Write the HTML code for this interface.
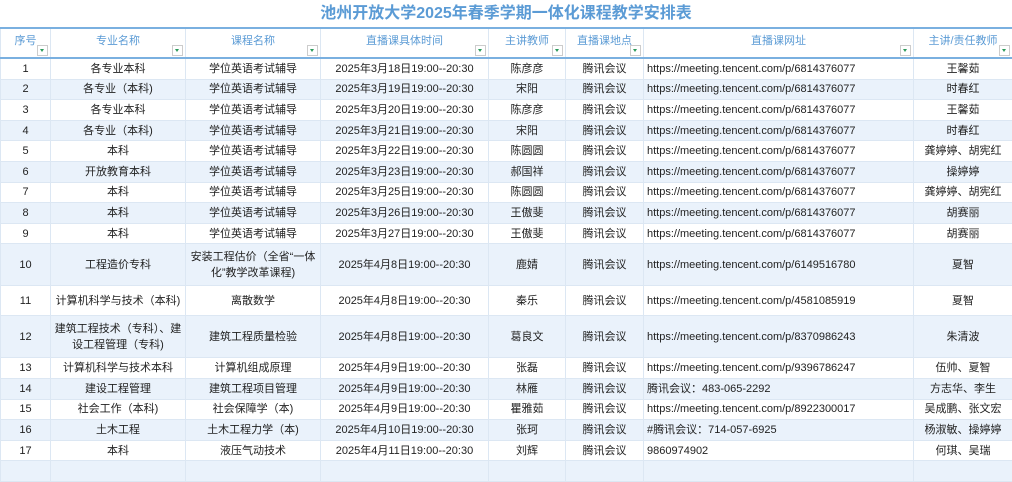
<!DOCTYPE html>
<html><head><meta charset="utf-8"><style>
body{margin:0;width:1012px;height:463px;overflow:hidden;background:#fff;font-family:"Liberation Sans","Noto Sans CJK SC",sans-serif;}
.title{position:absolute;left:0;top:3px;width:1012px;text-align:center;color:#5b9bd5;font-weight:bold;font-size:16px;line-height:22px;}
table{position:absolute;left:0;top:27px;border-collapse:collapse;table-layout:fixed;width:1012px;font-size:11px;color:#222;}
td,th{border-left:1px solid #dce7f3;border-right:1px solid #dce7f3;border-bottom:1px solid #dce7f3;padding:0 2px;text-align:center;overflow:hidden;white-space:nowrap;line-height:14px;}
th{height:23px;color:#5b9bd5;font-weight:normal;font-size:11px;border-top:2px solid #7ab0e0;border-bottom:2px solid #7ab0e0;position:relative;vertical-align:top;padding-top:5px;padding-bottom:0;}
th i{position:absolute;right:2px;bottom:1px;width:9px;height:9px;border:1px solid #ccc;background:#fff;}
th i:after{content:"";position:absolute;left:2px;top:3px;border-left:2.5px solid transparent;border-right:2.5px solid transparent;border-top:3px solid #2a9a5a;}
tr.s td{background:#eaf2fb;}
td.u{text-align:left;padding-left:3px;}
tr.h1 td{height:19.6px;}
td.w{white-space:normal;line-height:16px;}
</style></head><body>
<div class="title">池州开放大学2025年春季学期一体化课程教学安排表</div>
<table>
<colgroup><col style="width:50px"><col style="width:135px"><col style="width:135px"><col style="width:168px"><col style="width:77px"><col style="width:78px"><col style="width:270px"><col style="width:99px"></colgroup>
<tr><th>序号<i></i></th><th>专业名称<i></i></th><th>课程名称<i></i></th><th>直播课具体时间<i></i></th><th>主讲教师<i></i></th><th>直播课地点<i></i></th><th>直播课网址<i></i></th><th>主讲/责任教师<i></i></th></tr>
<tr class="h1"><td>1</td><td>各专业本科</td><td>学位英语考试辅导</td><td>2025年3月18日19:00--20:30</td><td>陈彦彦</td><td>腾讯会议</td><td class="u">https://meeting.tencent.com/p/6814376077</td><td>王馨茹</td></tr>
<tr class="h1 s"><td>2</td><td>各专业（本科)</td><td>学位英语考试辅导</td><td>2025年3月19日19:00--20:30</td><td>宋阳</td><td>腾讯会议</td><td class="u">https://meeting.tencent.com/p/6814376077</td><td>时春红</td></tr>
<tr class="h1"><td>3</td><td>各专业本科</td><td>学位英语考试辅导</td><td>2025年3月20日19:00--20:30</td><td>陈彦彦</td><td>腾讯会议</td><td class="u">https://meeting.tencent.com/p/6814376077</td><td>王馨茹</td></tr>
<tr class="h1 s"><td>4</td><td>各专业（本科)</td><td>学位英语考试辅导</td><td>2025年3月21日19:00--20:30</td><td>宋阳</td><td>腾讯会议</td><td class="u">https://meeting.tencent.com/p/6814376077</td><td>时春红</td></tr>
<tr class="h1"><td>5</td><td>本科</td><td>学位英语考试辅导</td><td>2025年3月22日19:00--20:30</td><td>陈圆圆</td><td>腾讯会议</td><td class="u">https://meeting.tencent.com/p/6814376077</td><td>龚婷婷、胡宪红</td></tr>
<tr class="h1 s"><td>6</td><td>开放教育本科</td><td>学位英语考试辅导</td><td>2025年3月23日19:00--20:30</td><td>郝国祥</td><td>腾讯会议</td><td class="u">https://meeting.tencent.com/p/6814376077</td><td>操婷婷</td></tr>
<tr class="h1"><td>7</td><td>本科</td><td>学位英语考试辅导</td><td>2025年3月25日19:00--20:30</td><td>陈圆圆</td><td>腾讯会议</td><td class="u">https://meeting.tencent.com/p/6814376077</td><td>龚婷婷、胡宪红</td></tr>
<tr class="h1 s"><td>8</td><td>本科</td><td>学位英语考试辅导</td><td>2025年3月26日19:00--20:30</td><td>王傲斐</td><td>腾讯会议</td><td class="u">https://meeting.tencent.com/p/6814376077</td><td>胡赛丽</td></tr>
<tr class="h1"><td>9</td><td>本科</td><td>学位英语考试辅导</td><td>2025年3月27日19:00--20:30</td><td>王傲斐</td><td>腾讯会议</td><td class="u">https://meeting.tencent.com/p/6814376077</td><td>胡赛丽</td></tr>
<tr class="s"><td style="height:41px">10</td><td>工程造价专科</td><td class="w">安装工程估价（全省“一体化”教学改革课程)</td><td>2025年4月8日19:00--20:30</td><td>鹿婧</td><td>腾讯会议</td><td class="u">https://meeting.tencent.com/p/6149516780</td><td>夏智</td></tr>
<tr><td style="height:29px">11</td><td>计算机科学与技术（本科)</td><td>离散数学</td><td>2025年4月8日19:00--20:30</td><td>秦乐</td><td>腾讯会议</td><td class="u">https://meeting.tencent.com/p/4581085919</td><td>夏智</td></tr>
<tr class="s"><td style="height:41px">12</td><td class="w">建筑工程技术（专科）、建设工程管理（专科)</td><td>建筑工程质量检验</td><td>2025年4月8日19:00--20:30</td><td>葛良文</td><td>腾讯会议</td><td class="u">https://meeting.tencent.com/p/8370986243</td><td>朱清波</td></tr>
<tr class="h1"><td>13</td><td>计算机科学与技术本科</td><td>计算机组成原理</td><td>2025年4月9日19:00--20:30</td><td>张磊</td><td>腾讯会议</td><td class="u">https://meeting.tencent.com/p/9396786247</td><td>伍帅、夏智</td></tr>
<tr class="h1 s"><td>14</td><td>建设工程管理</td><td>建筑工程项目管理</td><td>2025年4月9日19:00--20:30</td><td>林雁</td><td>腾讯会议</td><td class="u">腾讯会议：483-065-2292</td><td>方志华、李生</td></tr>
<tr class="h1"><td>15</td><td>社会工作（本科)</td><td>社会保障学（本)</td><td>2025年4月9日19:00--20:30</td><td>瞿雅茹</td><td>腾讯会议</td><td class="u">https://meeting.tencent.com/p/8922300017</td><td>吴成鹏、张文宏</td></tr>
<tr class="h1 s"><td>16</td><td>土木工程</td><td>土木工程力学（本)</td><td>2025年4月10日19:00--20:30</td><td>张珂</td><td>腾讯会议</td><td class="u">#腾讯会议：714-057-6925</td><td>杨淑敏、操婷婷</td></tr>
<tr class="h1"><td>17</td><td>本科</td><td>液压气动技术</td><td>2025年4月11日19:00--20:30</td><td>刘辉</td><td>腾讯会议</td><td class="u">9860974902</td><td>何琪、吴瑞</td></tr>
<tr class="h1 s"><td></td><td></td><td></td><td></td><td></td><td></td><td></td><td></td></tr>
</table>
</body></html>
